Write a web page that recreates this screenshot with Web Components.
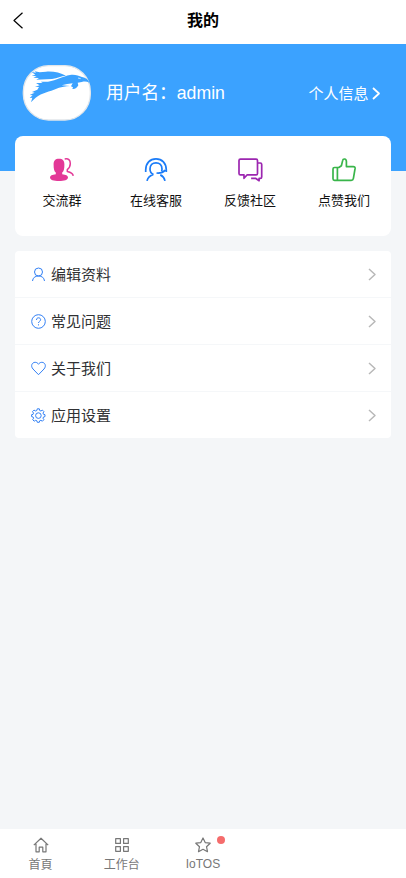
<!DOCTYPE html>
<html lang="zh-CN">
<head>
<meta charset="utf-8">
<title>我的</title>
<style>
html,body{margin:0;height:100%;overflow:hidden}
body{font-family:"Liberation Sans","Noto Sans CJK SC",sans-serif;background:#f4f6f8;color:#303133}
</style>
</head>
<body>
<profile-page></profile-page>
<script>
const icons = {
back:'<path d="M9.500.7 1 8.500l8.500 7.800"/>',
right:'<path d="m1 1 6 5.500L1 12"/>',
group:'<g fill="currentColor" stroke="none"><path d="M9 .8c3.800 0 5.400 1.800 5.400 5.700 0 4.500-.6 6.800-2.200 8.100v1.600c3.700.3 5.800 1.400 5.800 3.400 0 2.500-3.700 3.500-9 3.500S0 22.100 0 19.600c0-2 2.100-3.100 5.800-3.400v-1.600C4.200 13.300 3.600 11 3.600 6.500 3.600 2.600 5.200.8 9 .8z"/></g><path d="M14.700 1c3.700-.8 5.600 1 5.600 4.600 0 3.300-1.300 4.800-3 6.100v1.900c3.400.8 5.700 2.200 5.900 4.300" stroke-width="1.500"/>',
service:'<path d="M.7 14v-2C.7 5 5 .9 11 .9S21.300 5 21.300 12v2M8.600 16.500C6.200 15.600 5 13.700 5 11c0-3.900 2.500-6.200 6-6.200s6 2.300 6 6.200c0 1-.2 1.900-.6 2.700M11.500 15c3.700.5 6.500-.4 8.800-2.800M2 22.900c.8-3.200 2.800-5.300 6.400-6.400M20 22.900c-.7-2.800-2.200-4.900-4.700-6"/>',
chat:'<path d="M2.400 1.200h15.700q1.400 0 1.400 1.400v12.800q0 1.400-1.400 1.400H9.200L6 20.300v-3.500H2.400Q1 16.800 1 15.400V2.600q0-1.400 1.400-1.400zM20 5h2.300q1.400 0 1.400 1.400v12.500q0 1.400-1.400 1.400h-1.200v2.400l-3.600-2.400h-4.400"/>',
thumb:'<path d="M2.500 9.500h4.300l2.600-1.800 1.300-5.300C11 .5 14.300.3 14.400 3.400v5.200h6.900q2 0 1.800 1.800l-1.700 10q-.3 1.900-2.200 1.900H2.500Q1 22.300 1 20.800V11q0-1.500 1.500-1.500zm2.900 0v12.800"/>',
user:'<circle cx="7.500" cy="5" r="4"/><path d="M1.500 14c.4-3.300 2.600-5 6-5s5.600 1.700 6 5"/>',
help:'<circle cx="7.500" cy="7.500" r="6.800"/><path d="M5.500 6c0-1.500.8-2.200 2-2.200s2.100.7 2.100 1.900c0 1.700-2.100 1.600-2.100 3.300M7.500 10.300v1.100"/>',
heart:'<path d="M7.500 13.700 2 8C-.7 5 1 1.300 4.200 1.300c1.500 0 2.600.8 3.300 2 .7-1.200 1.800-2 3.300-2C14 1.300 15.700 5 13 8z"/>',
gear:'<path d="m6.300.8-.5 1.700-1.200.5-1.600-.9L1.500 3.600l1 1.500L2 6.400l-1.400.3v1.900l1.500.4.5 1.200-.9 1.500 1.500 1.500 1.500-.9 1.200.5.4 1.500h2l.4-1.500 1.200-.5 1.500.9 1.500-1.500-.9-1.500.5-1.200 1.500-.4V6.700l-1.500-.4-.5-1.200.9-1.500-1.500-1.500-1.500.9L8.700 2.500 8.300.8z"/><circle cx="7.400" cy="7.600" r="2.800"/>',
home:'<path d="M.8 8.100 8 1.200l7.200 6.900M3 6.700v8.100h3.200v-4.600h3.600v4.600H13V6.700"/>',
grid:'<path d="M1 1h4.700v4.700H1zm7.900 0h4.700v4.700H8.900zM1 8.900h4.700v4.700H1zm7.900 0h4.700v4.700H8.900z"/>',
star:'<path d="m8 1 2.200 4.600 5 .6-3.700 3.500 1 5L8 12.300l-4.500 2.400 1-5L.8 6.200l5-.6z"/>'
};
const def=(name,render)=>customElements.define(name,class extends HTMLElement{
 connectedCallback(){
  if(this.shadowRoot)return;
  this.attachShadow({mode:'open'}).innerHTML=render(this);
 }
});
def('line-icon',e=>{
 const w=e.getAttribute('w'),h=e.getAttribute('h');
 return `<style>:host{display:block;width:${w}px;height:${h}px;flex:none}svg{display:block;overflow:visible}</style>
 <svg width="${w}" height="${h}" viewBox="${e.getAttribute('box')||'0 0 '+w+' '+h}" fill="none" stroke="currentColor" stroke-width="${e.getAttribute('stroke')||1}" stroke-linejoin="round">${icons[e.getAttribute('name')]}</svg>`;
});
def('nav-header',()=>`<style>
:host{display:grid;grid-template-columns:44px 1fr 44px;align-items:center;height:44px;background:#fff;color:#000;text-align:center}
line-icon{margin:-4px 0 0 13px}b{font-size:16px;line-height:24px;margin-top:-3px}</style>
<line-icon name="back" w="10" h="17" stroke="1.200"></line-icon><b><slot></slot></b>`);
def('falcon-avatar',()=>`<style>:host{display:block;width:69px;height:56px;flex:none}svg{display:block}</style>
<svg width="69" height="56" viewBox="6 10 207 168">
<rect x="10" y="12" width="201" height="163" rx="76" ry="78" fill="#fff" stroke="#e2e6ea" stroke-width="4"/>
<g fill="#3ba2ff">
<path d="m35 31 13 2-4-4 15 3 19-2c20-2 43 3 60 12-16 1-25 7-42 10l-47 2 8-5-17-1 10-4-15-2 11-3z"/>
<path d="m48 64 20 0-6-4 22 0c27-4 44-16 66-20 16-2 25 2 36 6 12 2 19 8 22 17-8-4-14-4-23-2l-12 2 2 8c-4 8-10 12-18 11l2-5-6-3 5-9c-11 1-22 3-33 6l25 2c-30 2-39 8-56 14-22 6-43 13-61 35l4-14-8 1 9-8-9-1 15-7-8-2 16-7 5-8-12-1 14-4z"/>
</g>
<path d="m174 49 8 2" stroke="#fff" stroke-width="2"/></svg>`);
def('user-banner',()=>`<style>
:host{display:flex;align-items:flex-start;box-sizing:border-box;height:126.500px;padding:21px 25px 0 22px;margin-right:.5px;background:#3ba2ff;color:#fff}
.name{font-size:17.700px;line-height:26px;margin:15px 0 0 15px;flex:1;white-space:nowrap}
.more{display:flex;align-items:center;gap:3px;font-size:15px;line-height:22px;margin-top:17.500px}</style>
<falcon-avatar></falcon-avatar><div class="name"><slot></slot></div>
<div class="more">个人信息<line-icon name="right" w="9" h="13" stroke="1.800"></line-icon></div>`);
def('quick-action',e=>`<style>
:host{display:flex;flex-direction:column;align-items:center;flex:1;font-size:13px;line-height:20px;color:#111}
line-icon{color:${e.getAttribute('color')};margin-bottom:9px}</style>
<line-icon name="${e.getAttribute('icon')}" w="24" h="24" box="${e.getAttribute('icon')==='service'?'-1 0 24 24':'0 0 24 24'}" stroke="1.700"></line-icon><slot></slot>`);
def('action-card',()=>`<style>:host{display:flex;box-sizing:border-box;height:100px;margin:-34.500px 15px 15px;padding-top:22px;border-radius:8px;background:#fff}</style><slot></slot>`);
def('menu-list',()=>`<style>:host{display:block;margin:0 15px;border-radius:4px;background:#fff;overflow:hidden}</style><slot></slot>`);
def('menu-item',e=>`<style>
:host{display:flex;align-items:center;height:46px;padding:0 15px 0 16px;font-size:15px;line-height:22px;color:#303133;border-bottom:1px solid #f5f7f9}
:host(:last-child){border-bottom-width:0}
.label{flex:1;margin-left:5px;padding-top:1px}.main{color:#3280f5}.arrow{color:#b8b8b8}</style>
<line-icon class="main" name="${e.getAttribute('icon')}" w="15" h="15"></line-icon><div class="label"><slot></slot></div>
<line-icon class="arrow" name="right" w="8" h="13" stroke="1.500"></line-icon>`);
def('tab-item',e=>`<style>
:host{display:flex;flex-direction:column;align-items:center;width:81.200px;color:#777;font-size:12px;line-height:18px}
.icon{position:relative;margin-bottom:${e.hasAttribute('dot')?2:3}px}.dot{position:absolute;left:22px;top:-1px;width:8px;height:8px;border-radius:50%;background:#f56c6c}</style>
<div class="icon"><line-icon name="${e.getAttribute('icon')}" w="16" h="16" box="${e.getAttribute('icon')==='grid'?'-.7 -.7 16 16':'0 0 16 16'}" stroke="1.200"></line-icon>${e.hasAttribute('dot')?'<i class="dot"></i>':''}</div><slot></slot>`);
def('tab-bar',()=>`<style>:host{display:flex;box-sizing:border-box;height:49px;padding-top:8px;background:#fff}</style><slot></slot>`);
def('profile-page',()=>`<style>
:host{display:flex;flex-direction:column;height:100vh;background:#f4f6f8}main{flex:1;min-height:0}</style>
<nav-header>我的</nav-header>
<main><user-banner>用户名：admin</user-banner>
<action-card><quick-action icon="group" color="#e33897">交流群</quick-action><quick-action icon="service" color="#1b7cf8">在线客服</quick-action><quick-action icon="chat" color="#9c26b0">反馈社区</quick-action><quick-action icon="thumb" color="#39b54a">点赞我们</quick-action></action-card>
<menu-list><menu-item icon="user">编辑资料</menu-item><menu-item icon="help">常见问题</menu-item><menu-item icon="heart">关于我们</menu-item><menu-item icon="gear">应用设置</menu-item></menu-list></main>
<tab-bar><tab-item icon="home">首頁</tab-item><tab-item icon="grid">工作台</tab-item><tab-item icon="star" dot>IoTOS</tab-item></tab-bar>`);
</script>
</body>
</html>
